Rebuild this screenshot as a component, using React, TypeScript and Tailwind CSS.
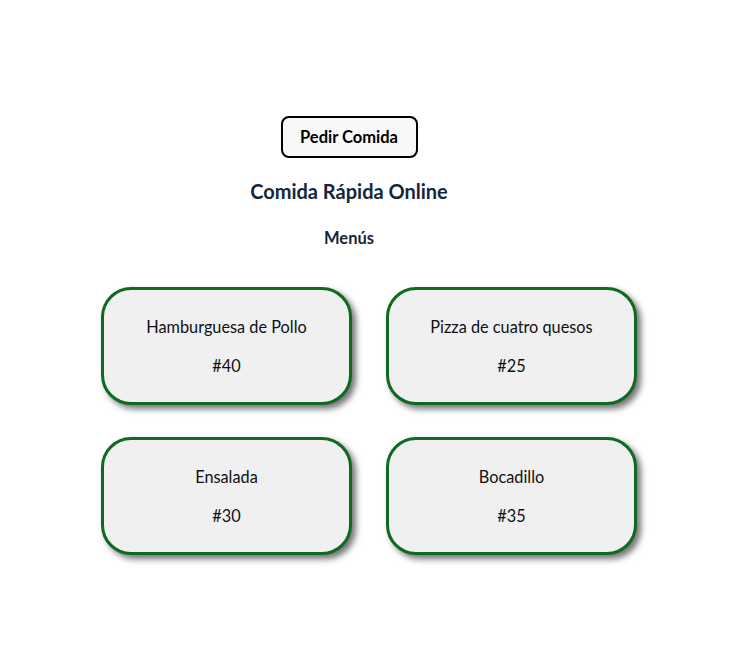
import React from "react";

const items = [
  { name: "Hamburguesa de Pollo", price: "#40" },
  { name: "Pizza de cuatro quesos", price: "#25" },
  { name: "Ensalada", price: "#30" },
  { name: "Bocadillo", price: "#35" },
];

export default function App() {
  return (
    <div className="w-[751px] h-[650px] bg-white text-[#111] font-['Lato',sans-serif]">
      <div className="flex flex-col items-center w-[698px] pt-[116px]">
        <button className="w-[137px] h-[42px] border-2 border-black rounded-[8px] bg-[#f8f8f8] text-[16.5px] leading-[20px] font-bold text-black">
          Pedir Comida
        </button>
        <h1 className="mt-[21px] text-[20px] leading-[24px] font-bold text-[#14273a]">Comida Rápida Online</h1>
        <h2 className="mt-[25px] text-[16.5px] leading-[20px] font-bold text-[#14273a]">Menús</h2>
      </div>
      <div className="grid grid-cols-[251px_251px] gap-x-[34px] gap-y-[32px] pl-[101px] mt-[39px]">
        {items.map((it) => (
          <div
            key={it.name}
            className="h-[118px] rounded-[30px] border-[3px] border-[#0d6a21] bg-[#f0f0f0] shadow-[4px_4px_6px_rgba(0,0,0,0.55)] flex flex-col items-center justify-center gap-[19px] text-[16.3px] leading-[20px] text-[#111]"
          >
            <div>{it.name}</div>
            <div>{it.price}</div>
          </div>
        ))}
      </div>
    </div>
  );
}
